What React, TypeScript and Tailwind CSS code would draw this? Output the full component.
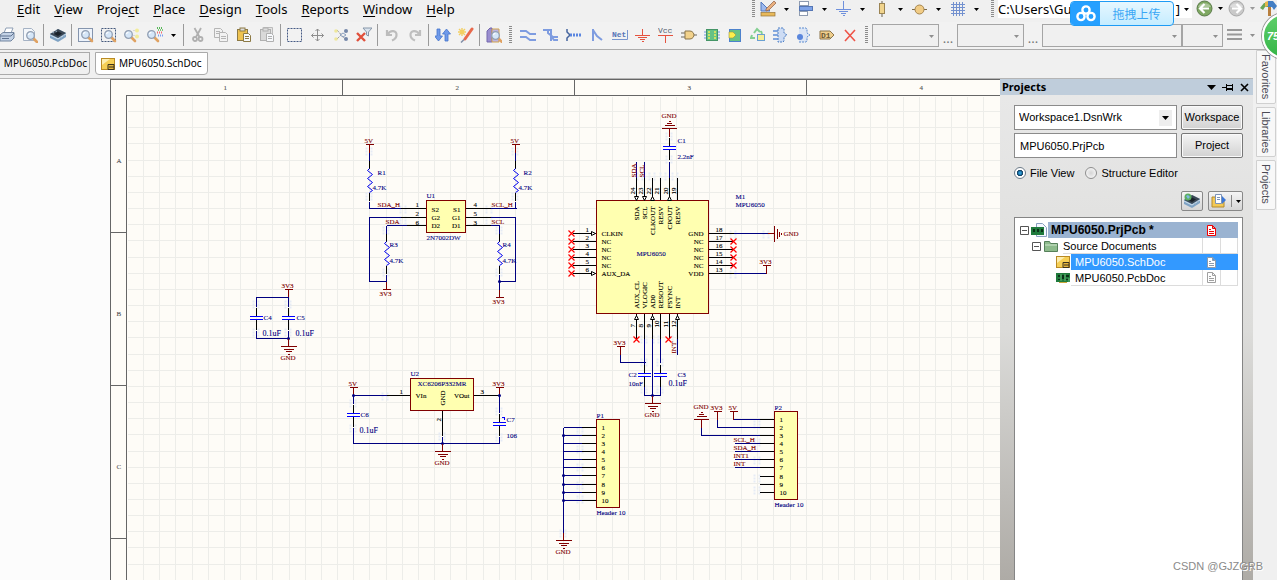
import React from "react";

type Kids = { children?: React.ReactNode };

/* ---------- small drawing helpers ---------- */

function Svg({ children, size = 16 }: Kids & { size?: number }) {
  return (
    <svg width={size} height={size} viewBox="0 0 16 16" fill="none" aria-hidden="true" className="shrink-0">
      {children}
    </svg>
  );
}

function Arrow({ color = "#000" }: { color?: string }) {
  return (
    <svg width="5" height="3" viewBox="0 0 5 3" aria-hidden="true" className="shrink-0">
      <path d="M0 0h5L2.5 3z" fill={color} />
    </svg>
  );
}

function Lens({ x = 0, y = 0 }: { x?: number; y?: number }) {
  return (
    <g transform={`translate(${x} ${y})`}>
      <path d="M8 8l4 4" stroke="#e0a262" strokeWidth="2.6" strokeLinecap="round" />
      <circle cx="5.5" cy="5.5" r="3.8" fill="#d5e6f8" stroke="#93a0b3" strokeWidth="1.3" />
      <path d="M3.4 5a2.4 2.4 0 0 1 2-1.8" stroke="#fff" strokeWidth="1.1" />
    </g>
  );
}

const Board = () => (
  <g>
    <path d="M0 7l8-5 8 4v4l-8 5-8-4z" fill="#7fa3c4" />
    <path d="M0 7l8-5 8 4-8 5z" fill="#3b4754" />
    <path d="M4 7l4-2.600 4 2-4 2.600z" fill="#1a222b" />
    <path d="M0 8l8 4 8-5" stroke="#cfe0ee" strokeWidth="1" />
    <path d="M2 5l2 1M5 3.500l2 1M10 10l2 1M13 8l2 1" stroke="#9fb4c6" />
  </g>
);

const Clip = ({ a, b }: { a: string; b: string }) => (
  <g>
    <rect x="1.500" y="2.500" width="10" height="11" fill={a} stroke={b} />
    <rect x="4" y="1" width="5" height="3" fill="#ddd" stroke={b} />
    <path d="M7.500 6.500h5l2 2v6h-7z" fill="#f6f8fb" stroke={b} />
    <path d="M9 9.500h4M9 11.500h4" stroke={b} />
  </g>
);

const blue = "#7e9ce0";

const icons: Record<string, React.ReactNode> = {
  print: (
    <g>
      <path d="M5 6l2-5h7l-2 5" fill="#fff" stroke="#8f9fb5" />
      <path d="M1 8l3-2.500h11V11l-3 3H1z" fill="#c3d2e6" stroke="#7386a0" />
      <path d="M1 9h11l3-3M3 11.500h7" stroke="#5f7391" />
    </g>
  ),
  preview: (
    <g>
      <path d="M1.500 1.500h8l3 3v9h-11z" fill="#f4f7fb" stroke="#a5b2c4" />
      <Lens x={3} y={3} />
    </g>
  ),
  board: <Board />,
  zoomDoc: (
    <g>
      <rect x="0.500" y="1.500" width="14" height="13" fill="#edf3fb" stroke="#8595ae" />
      <Lens x={2} y={2} />
    </g>
  ),
  zoomArea: (
    <g>
      <rect x="0.500" y="1.500" width="14" height="13" stroke="#44597c" strokeDasharray="2 1" />
      <Lens x={2} y={2} />
    </g>
  ),
  zoomSel: (
    <g>
      <Lens x={-1} y={2} />
      <circle cx="13" cy="3.500" r="2" fill="#f2ec9a" />
      <circle cx="13" cy="9.500" r="2" fill="#f2ec9a" />
      <path d="M9 3.500h2M9 8.500h2" stroke="#d8d8d8" />
    </g>
  ),
  zoomFilter: (
    <g>
      <Lens x={-1} y={2} />
      <path d="M10 1h6" stroke="#57b857" strokeWidth="2" strokeDasharray="1 1" />
      <path d="M10 3h6" stroke="#7cc77c" strokeWidth="2" strokeDasharray="1 1" strokeDashoffset="1" />
      <path d="M10 5.500h6" stroke="#f07070" strokeWidth="2" strokeDasharray="1 1" />
      <path d="M11 8.500h5" stroke="#7c9df0" strokeWidth="2" strokeDasharray="1 1" />
    </g>
  ),
  cut: (
    <g stroke="#b0b0b0" strokeWidth="1.800">
      <path d="M4.500 1l5 9M11 1L6 10" />
      <circle cx="5" cy="12" r="2" />
      <circle cx="10.500" cy="12" r="2" />
    </g>
  ),
  copy: (
    <g fill="#f2f2f2" stroke="#b5b5b5">
      <path d="M1.500 1.500h6l2 2v7h-8z" />
      <path d="M6.500 5.500h6l2 2v7h-8z" />
      <path d="M3 4.500h4M3 6.500h3M8 9.500h5M8 11.500h5" />
    </g>
  ),
  paste: <Clip a="#efc350" b="#8d7a45" />,
  pasteAll: (
    <g>
      <path d="M4.500 0.500h9v9h-9z" fill="#e4e4e4" stroke="#bbb" />
      <Clip a="#d9d9d9" b="#b0b0b0" />
    </g>
  ),
  select: <rect x="0.500" y="1.500" width="14" height="13" stroke="#465b85" strokeDasharray="2 1" />,
  move: (
    <path d="M7.500 2v12M1.500 8.500h12M5.500 4l2-2 2 2M5.500 12l2 2 2-2M3.500 6.500l-2 2 2 2M11.500 6.500l2 2-2 2" stroke="#8d8d8d" />
  ),
  deselect: (
    <g>
      <path d="M4 3l8 9M4 12l4-4" stroke="#666" strokeDasharray="1 1" />
      <circle cx="3" cy="4" r="1.800" fill="#eee79b" />
      <circle cx="3" cy="12" r="1.800" fill="#eee79b" />
      <circle cx="13" cy="4" r="2" fill="#7487a9" />
      <circle cx="13" cy="12" r="2" fill="#7487a9" />
      <path d="M7 8l3-2 3 2-3 2z" stroke="#8ba0c0" />
    </g>
  ),
  clearFilter: (
    <g>
      <path d="M7 1h9l-3.500 4v4l-2-1V5z" fill="#dbe4ee" stroke="#8898aa" />
      <path d="M1 6l8 8M9 6l-8 8" stroke="#e0503c" strokeWidth="2.400" />
    </g>
  ),
  undo: (
    <g stroke="#bcbcbc" strokeWidth="2.200">
      <path d="M4 7c2-4 9-4 8.500 1 0 3-2 4.500-4.500 5.500" />
      <path d="M3 3v5h5" />
    </g>
  ),
  redo: (
    <g stroke="#bfbfbf" strokeWidth="2.200">
      <path d="M12 7C10 3 3 3 3.500 8c0 3 2 4.500 4.500 5.500" />
      <path d="M13 3v5H8" />
    </g>
  ),
  updown: (
    <g fill="#6f9aea" stroke="#4573cc" strokeWidth="0.800">
      <path d="M2 2h3v7h2.500L3.500 14-0.500 9H2z" />
      <path d="M10 14h3V7h2.500L11.500 2 7.500 7H10z" />
    </g>
  ),
  wand: (
    <g>
      <path d="M4 1v8M0 5h8M1 2l6 6M7 2L1 8" stroke="#f3cf62" strokeWidth="1.400" />
      <path d="M14 2L7 12" stroke="#e8694c" strokeWidth="3" strokeLinecap="round" />
      <path d="M6 12.500l-3 3" stroke="#7f8da5" strokeWidth="1.500" />
    </g>
  ),
  find: (
    <g>
      <path d="M1 4l3-3h2v14H1z" fill="#9a8ed0" stroke="#7468ad" />
      <path d="M6 2h7v13H6z" fill="#bdb4e2" stroke="#d0a350" />
      <Lens x={4} y={3} />
    </g>
  ),
  wire: <path d="M0 4h6l4 3h6M0 10h6l4 3h6" stroke={blue} strokeWidth="2" />,
  bus: <path d="M0 3h8v11M5 3v3l5 4h5M8 9l3 4h4" stroke={blue} strokeWidth="2" />,
  harness: (
    <g>
      <path d="M1 2v3l3 3-3 3v3" stroke="#46659f" strokeWidth="1.500" />
      <path d="M4 8h12" stroke="#5b86e0" strokeWidth="3" strokeDasharray="2 1" />
    </g>
  ),
  entry: <path d="M4 2v12M4 3l4 6 5 4" stroke={blue} strokeWidth="2" />,
  net: (
    <g>
      <text x="0" y="10" className="font-['Liberation_Mono']" fontSize="8" fontWeight="700" fill="#5876b8">Net</text>
      <path d="M0 12.500h15.500V3" stroke="#7896cf" />
    </g>
  ),
  gnd: <path d="M7.500 2v7M0 8.500h15M3 10.500h9M5 12.500h5M7 14.500h2" stroke="#e5533f" />,
  vcc: (
    <g>
      <text x="0" y="6" className="font-['Liberation_Mono']" fontSize="8" fill="#555f70">Vcc</text>
      <path d="M0 8.500h15M7.500 8v8" stroke="#e5533f" />
    </g>
  ),
  gate: (
    <g>
      <path d="M0 6h4M0 10h4M12 8h4" stroke="#6b675e" />
      <path d="M4 4h5c3 0 4 3 4 4s-1 4-4 4H4z" fill="#f2d28c" stroke="#8a7448" />
    </g>
  ),
  ic: (
    <g>
      <path d="M0 5h16M0 8h16M0 11h16" stroke="#6d95df" />
      <rect x="2.500" y="2.500" width="11" height="11" fill="#66c285" stroke="#459567" />
      <path d="M4 5h2M4 8h2M4 11h2M10 5h2M10 8h2M10 11h2" stroke="#f4ec5a" strokeWidth="1.500" />
    </g>
  ),
  sheet: (
    <g>
      <rect x="2.500" y="2.500" width="11" height="12" fill="#66c285" stroke="#4d82cc" />
      <path d="M2 5h4l3 3-3 3H2z" fill="#fbee4c" stroke="#9b9340" strokeWidth="0.600" />
    </g>
  ),
  device: (
    <g>
      <path d="M4 6l3-4 3 3M2 8l-1 3h4M11 4l1 3" stroke="#83cf91" strokeWidth="2" />
      <rect x="7.500" y="7.500" width="7" height="6" fill="#f7ee94" stroke="#6aa0d2" />
    </g>
  ),
  harnessConn: (
    <g>
      <path d="M5 1h5l1 1v4l3 2-3 2v4l-1 1H5z" fill="#cddcf4" stroke="#4c7ec4" strokeDasharray="2 1" />
      <path d="M0 4h5M0 8h5M0 12h5" stroke="#5f8fd8" strokeWidth="1.500" />
    </g>
  ),
  harnessEntry: (
    <g>
      <path d="M3 1h7l1 1v4l3 2-3 2v4l-1 1H3" fill="#dbe5f5" stroke="#5b8bd0" strokeDasharray="2 1" />
      <circle cx="4" cy="10" r="3" fill="#5a86dc" />
    </g>
  ),
  port: (
    <g>
      <path d="M1 4h10l4 4-4 4H1z" fill="#efce8c" stroke="#8c744a" />
      <text x="2" y="11" className="font-['Liberation_Mono']" fontSize="8" fontWeight="700" fill="#6c5a37">D1</text>
    </g>
  ),
  noErc: <path d="M3 3l10 11M13 3L3 14" stroke="#ee5448" strokeWidth="1.600" />,
  draw: (
    <g>
      <path d="M1 1l9 9H1z" fill="#9db9ee" stroke="#5378bd" />
      <path d="M6 8l8-8 2 2-7 7-3 1z" fill="#e9b07e" stroke="#8c5d45" strokeWidth="0.700" />
      <rect x="1" y="11.500" width="14" height="3.500" fill="#e8b95a" stroke="#96743a" strokeWidth="0.700" />
    </g>
  ),
  align: (
    <g>
      <rect x="1.500" y="0.500" width="9" height="4" fill="#fff" stroke="#8e9bb0" />
      <rect x="1.500" y="5.500" width="13" height="4" fill="#7ea3e8" stroke="#5677b5" />
      <rect x="1.500" y="10.500" width="8" height="4" fill="#fff" stroke="#8e9bb0" />
    </g>
  ),
  power: <path d="M7.500 0v8M0 8.500h15M3 10.500h9M5 12.500h5M7 14.500h2" stroke="#6f90dc" />,
  resistor: (
    <g>
      <path d="M8 0v16" stroke="#6b6250" />
      <rect x="5.500" y="2.500" width="5" height="10" fill="#f1d48d" stroke="#9b8453" />
    </g>
  ),
  probe: (
    <g>
      <path d="M0 8.500h15" stroke="#7a6b4c" />
      <circle cx="7.500" cy="8.500" r="4.500" fill="#f1cc86" stroke="#a5854e" />
    </g>
  ),
  grid: <path d="M3.500 1v14M6.500 1v14M9.500 1v14M12.500 1v14M1 3.500h14M1 6.500h14M1 9.500h14M1 12.500h14" stroke="#7391cf" />,
};

function Tool({ icon, label }: { icon: string; label: string }) {
  return (
    <button type="button" aria-label={label} className="flex h-6 w-[23px] shrink-0 items-center justify-center">
      <Svg>{icons[icon]}</Svg>
    </button>
  );
}

const Sep = () => <span className="mx-0.5 h-[22px] w-px shrink-0 bg-[#9a9a9a]" />;

const Grip = () => (
  <svg width="3" height="18" aria-hidden="true" className="mx-1 shrink-0">
    <path d="M1.500 0v18" stroke="#8c8c8c" strokeWidth="3" strokeDasharray="1 1" />
  </svg>
);

function StyleSelect({ label, className }: { label: string; className: string }) {
  return (
    <span className={`grid h-[23px] shrink-0 items-center border border-[#a5a5a5] bg-[#f0f0f0] ${className}`}>
      <select aria-label={label} className="col-start-1 row-start-1 h-full w-full appearance-none bg-transparent">
        <option></option>
      </select>
      <span className="pointer-events-none col-start-1 row-start-1 mr-1 justify-self-end">
        <Arrow color="#8f8f8f" />
      </span>
    </span>
  );
}

/* ---------- schematic ---------- */

const NAVY = "#000080";
const RED = "#800000";

const range = (n: number) => Array.from({ length: n }, (_, i) => i);
const PITCH = 16.16;
const gridPath =
  range(140).map((i) => `M${Math.round(127 + (i + 1) * PITCH)} 96V2200`).join("") +
  range(120).map((i) => `M127 ${Math.round(95 + (i + 1) * PITCH)}H2500`).join("");

function T({ x, y, c = NAVY, s = 7, up, end, children }: { x: number; y: number; c?: string; s?: number; up?: boolean; end?: boolean; children: React.ReactNode }) {
  return (
    <text
      x={x - 1}
      y={y - 1}
      fill={c}
      stroke={c}
      strokeWidth="0.1"
      fontSize={s}
      textAnchor={end ? "end" : "start"}
      transform={up ? `rotate(-90 ${x - 1} ${y - 1})` : undefined}
    >
      {children}
    </text>
  );
}

const Chip = ({ x, y, w, h }: { x: number; y: number; w: number; h: number }) => (
  <rect x={x} y={y} width={w} height={h} fill="#ffffb0" stroke={RED} shapeRendering="crispEdges" />
);

const Gnd = ({ x, y }: { x: number; y: number }) => (
  <g>
    <path d={`M${x} ${y - 8}v8M${x - 8} ${y}h16M${x - 5} ${y + 3}h10M${x - 3} ${y + 5}h6M${x - 1} ${y + 8}h2`} stroke={RED} shapeRendering="crispEdges" />
    <T x={x - 7} y={y + 14} c={RED}>GND</T>
  </g>
);

const GndUp = ({ x, y }: { x: number; y: number }) => (
  <g>
    <path d={`M${x} ${y + 8}v-8M${x - 8} ${y}h15M${x - 5} ${y - 3}h10M${x - 3} ${y - 5}h5M${x - 1} ${y - 7}h2`} stroke={RED} shapeRendering="crispEdges" />
    <T x={x - 7} y={y - 10} c={RED}>GND</T>
  </g>
);

const Rail = ({ x, y, name, down }: { x: number; y: number; name: string; down?: boolean }) => (
  <g>
    <path d={`M${x - 4} ${y}h8M${x} ${y}v${down ? -8 : 8}`} stroke={RED} shapeRendering="crispEdges" />
    <T x={x - (name.length > 2 ? 6 : 4)} y={down ? y + 7 : y - 1} c={RED}>{name}</T>
  </g>
);

const Zig = ({ x, y }: { x: number; y: number }) => (
  <g>
    <path d={`M${x} ${y - 8}v8M${x} ${y + 24}v8`} stroke="#000" shapeRendering="crispEdges" />
    <path d={`M${x} ${y}l-2 2 5 4-5 4 5 4-5 4 5 4-3 2`} stroke="#0000ee" />
    <path d={`M${x} ${y - 16}v8M${x} ${y + 33}v7`} stroke={NAVY} shapeRendering="crispEdges" />
  </g>
);

const Cap = ({ x, y }: { x: number; y: number }) => (
  <g shapeRendering="crispEdges">
    <path d={`M${x} ${y - 9}v9M${x} ${y + 3}v10`} stroke="#000" />
    <path d={`M${x - 7} ${y}h13M${x - 7} ${y + 3}h13`} stroke="#0000ff" />
  </g>
);

const Dot = ({ x, y }: { x: number; y: number }) => <circle cx={x} cy={y} r="1.5" fill={NAVY} />;
const Cross = ({ x, y }: { x: number; y: number }) => (
  <path d={`M${x - 3} ${y - 3}l6 6M${x + 3} ${y - 3}l-6 6`} stroke="#ff0000" strokeWidth="1.2" />
);

const headerRows = [0, 8, 16, 24, 32, 40, 48, 57, 65, 73];
const leftPins = ["CLKIN", "NC", "NC", "NC", "NC", "AUX_DA"];
const rightPins = ["GND", "NC", "NC", "NC", "NC", "VDD"];
const topPins = ["SDA", "SCL", "CLKOUT", "RESV", "CPOUT", "RESV"];
const bottomPins = ["AUX_CL", "VLOGIC", "AD0", "RESOUT", "FSYNC", "INT"];
const pinX = [636, 644, 652, 660, 669, 677];
const halos = [
  [369, 150], [369, 195], [515, 150], [515, 195], [403, 208], [403, 219], [489, 208], [489, 219],
  [386, 229], [386, 271], [499, 229], [499, 271], [669, 135], [669, 158], [640, 175], [652, 175],
  [663, 175], [675, 175], [733, 233], [766, 233], [733, 273], [644, 338], [656, 338], [675, 338],
  [644, 361], [660, 361], [644, 388], [660, 388], [256, 303], [288, 303], [256, 331], [288, 331],
  [385, 395], [353, 402], [353, 427], [499, 410], [499, 436], [442, 435], [580, 430], [580, 448],
  [580, 466], [580, 484], [580, 498], [563, 532], [757, 423], [757, 441], [757, 459], [757, 477], [757, 489],
];

function Schematic() {
  return (
    <svg
      role="img"
      aria-label="MPU6050 schematic sheet"
      className="h-full w-full overflow-hidden bg-[#fefcf7] font-['Liberation_Serif',serif]"
      fill="none"
    >
      <g transform="translate(-109.5 -78.5)">
        <path d={gridPath} stroke="#ededE9" shapeRendering="crispEdges" />
        <path
          d="M110 2200V79H2500M126 2200V95H2500M342 79v16M574 79v16M806 79v16M1038 79v16M110 232h16M110 385h16M110 538h16M110 691h16"
          stroke="#666"
          shapeRendering="crispEdges"
        />
        {["1", "2", "3", "4"].map((n, i) => (
          <T key={n} x={224 + i * 232} y={90} c="#555">{n}</T>
        ))}
        {["A", "B", "C"].map((n, i) => (
          <T key={n} x={117} y={163 + i * 153} c="#555">{n}</T>
        ))}
        {halos.map(([x, y]) => (
          <path key={`${x}-${y}`} d={`M${x - 3} ${y - 3}v8M${x + 2} ${y - 3}v8`} stroke="#e6ebf6" strokeWidth="2" strokeDasharray="2 1" />
        ))}

        {/* level shifter */}
        <Rail x={369} y={144} name="5V" />
        <Rail x={515} y={144} name="5V" />
        <Zig x={369} y={168} />
        <Zig x={515} y={168} />
        <Zig x={386} y={241} />
        <Zig x={499} y={241} />
        <g shapeRendering="crispEdges">
          <path d="M369 208H401M401 217H369V281H386M386 225H406M386 225V233M490 208H516M490 217H515V281H499M490 225H499V233M499 280V289" stroke={NAVY} />
          <path d="M400 208H426M400 217H426M406 225H426M465 208H490M465 217H490M465 225H490" stroke="#000" />
        </g>
        <Rail x={386} y={289} name="3V3" down />
        <Rail x={499} y={297} name="3V3" down />
        <Dot x={499} y={281} />
        <Chip x={426} y={200} w={39} h={32} />
        <T x={427} y={198}>U1</T>
        <T x={427} y={240}>2N7002DW</T>
        <T x={378} y={175}>R1</T>
        <T x={373} y={190}>4.7K</T>
        <T x={524} y={175}>R2</T>
        <T x={519} y={190}>4.7K</T>
        <T x={390} y={247}>R3</T>
        <T x={390} y={263}>4.7K</T>
        <T x={503} y={247}>R4</T>
        <T x={503} y={263}>4.7K</T>
        <T x={378} y={207} c={RED}>SDA_H</T>
        <T x={386} y={224} c={RED}>SDA</T>
        <T x={492} y={207} c={RED}>SCL_H</T>
        <T x={492} y={224} c={RED}>SCL</T>
        {[["1", "S2", "S1", "4"], ["2", "G2", "G1", "5"], ["6", "D2", "D1", "3"]].map(([a, b, c, d], i) => (
          <g key={a}>
            <T x={416} y={207 + i * 9} c="#000">{a}</T>
            <T x={432} y={212 + i * 8} c="#000">{b}</T>
            <T x={461} y={212 + i * 8} c="#000" end>{c}</T>
            <T x={474} y={207 + i * 9} c="#000">{d}</T>
          </g>
        ))}

        {/* decoupling capacitors */}
        <Rail x={288} y={289} name="3V3" />
        <Cap x={256} y={316} />
        <Cap x={288} y={316} />
        <path d="M256 306V297H288V306M256 330V338H288V330" stroke={NAVY} shapeRendering="crispEdges" />
        <Dot x={288} y={338} />
        <Gnd x={288} y={346} />
        <T x={264} y={320}>C4</T>
        <T x={263} y={336} s={8}>0.1uF</T>
        <T x={297} y={320}>C5</T>
        <T x={296} y={336} s={8}>0.1uF</T>

        {/* regulator */}
        <Rail x={353} y={387} name="5V" />
        <Rail x={499} y={387} name="3V3" />
        <Cap x={353} y={413} />
        <Cap x={499} y={422} />
        <g shapeRendering="crispEdges">
          <path d="M386 395H353V403M353 427V443H499V436M499 395V412M442 436V443" stroke={NAVY} />
          <path d="M386 395H410M473 395H499M442 410V435" stroke="#000" />
          <path d="M501 417h3v2" stroke="#0000ff" />
        </g>
        <Dot x={353} y={395} />
        <Dot x={499} y={395} />
        <Dot x={442} y={443} />
        <Gnd x={442} y={451} />
        <Chip x={410} y={378} w={63} h={32} />
        <T x={411} y={376}>U2</T>
        <T x={418} y={386}>XC6206P332MR</T>
        <T x={416} y={398} c="#000">VIn</T>
        <T x={470} y={398} c="#000" end>VOut</T>
        <T x={445} y={406} c="#000" up>GND</T>
        <T x={400} y={394} c="#000">1</T>
        <T x={481} y={394} c="#000">3</T>
        <T x={441} y={422} c="#000" up>2</T>
        <T x={361} y={417}>C6</T>
        <T x={360} y={433} s={8}>0.1uF</T>
        <T x={507} y={422}>C7</T>
        <T x={507} y={438}>106</T>

        {/* sensor */}
        <GndUp x={669} y={128} />
        <Cap x={669} y={146} />
        <g shapeRendering="crispEdges">
          <path d="M636 161V177M644 161V177M669 161V177M733 233H767M733 273H766M644 338V364M652 338V395M660 338V362M677 338V354M620 354V362H645M644 386V395H660V386" stroke={NAVY} />
          <path d="M767 233H774M774 225V241M777 228V238M779 231V236M781 232V234" stroke={RED} />
          {pinX.map((x) => (
            <path key={x} d={`M${x} 177V200M${x} 313V338`} stroke="#000" />
          ))}
          {range(6).map((i) => (
            <path key={i} d={`M572 ${233 + i * 8}H596M708 ${233 + i * 8}H733`} stroke="#000" />
          ))}
        </g>
        <T x={784} y={236} c={RED}>GND</T>
        <Rail x={766} y={265} name="3V3" />
        <Rail x={620} y={346} name="3V3" />
        <Cap x={644} y={373} />
        <Cap x={660} y={373} />
        <Dot x={652} y={395} />
        <Gnd x={652} y={403} />
        <Chip x={596} y={200} w={112} h={113} />
        {range(6).map((i) => (
          <g key={i}>
            <Cross x={571} y={233 + i * 8} />
            {i > 0 && i < 5 && <Cross x={733} y={233 + i * 8} />}
            <T x={586} y={232 + i * 8} c="#000">{i + 1}</T>
            <T x={716} y={232 + i * 8} c="#000">{18 - i}</T>
            <T x={602} y={236 + i * 8} c="#000">{leftPins[i]}</T>
            <T x={704} y={236 + i * 8} c="#000" end>{rightPins[i]}</T>
            <T x={pinX[i] - 1} y={195} c="#000" up>{24 - i}</T>
            <T x={pinX[i] + 3} y={207} c="#000" up end>{topPins[i]}</T>
            <T x={pinX[i] + 3} y={309} c="#000" up>{bottomPins[i]}</T>
            <T x={pinX[i] - 1} y={328} c="#000" up>{i + 7}</T>
          </g>
        ))}
        <path
          d="M591 231v4l4-2zM591 271v4l4-2zM634 196h4l-2 4zM642 196h4l-2 4zM650 200h4l-2-4zM667 200h4l-2-4zM634 319h4l-2-4zM650 319h4l-2-4zM675 319h4l-2-4z"
          fill="#fff"
          stroke="#000"
        />
        <Cross x={636} y={339} />
        <Cross x={668} y={339} />
        <T x={636} y={178} c={RED} up>SDA</T>
        <T x={644} y={178} c={RED} up>SCL</T>
        <T x={676} y={354} c={RED} up>INT</T>
        <T x={678} y={143}>C1</T>
        <T x={678} y={159}>2.2nF</T>
        <T x={736} y={199}>M1</T>
        <T x={736} y={207}>MPU6050</T>
        <T x={637} y={256}>MPU6050</T>
        <T x={629} y={377}>C2</T>
        <T x={629} y={386}>10nF</T>
        <T x={678} y={377}>C3</T>
        <T x={669} y={386} s={8}>0.1uF</T>

        {/* headers */}
        <g shapeRendering="crispEdges">
          <path d="M563 427V532" stroke={NAVY} />
          {headerRows.map((r, i) => (
            <g key={r}>
              <path d={`M563 ${427 + r}H581`} stroke={NAVY} />
              <path d={`M581 ${427 + r}H596M759 ${419 + r}H774`} stroke="#000" />
              {i > 2 && i < 7 && <path d={`M734 ${419 + r}H759`} stroke={NAVY} />}
            </g>
          ))}
          <path d="M733 419H759M717 419V427H759M701 427V435H759" stroke={NAVY} />
        </g>
        {[8, 48, 57, 65, 73].map((r) => (
          <Dot key={r} x={563} y={427 + r} />
        ))}
        <Gnd x={563} y={540} />
        <GndUp x={701} y={419} />
        <Rail x={717} y={411} name="3V3" />
        <Rail x={733} y={411} name="5V" />
        <Chip x={596} y={419} w={23} h={88} />
        <Chip x={774} y={411} w={23} h={88} />
        {headerRows.map((r, i) => (
          <g key={r}>
            <T x={602} y={430 + r} c="#000">{i + 1}</T>
            <T x={780} y={422 + r} c="#000">{i + 1}</T>
          </g>
        ))}
        <T x={597} y={418}>P1</T>
        <T x={775} y={410}>P2</T>
        <T x={597} y={515}>Header 10</T>
        <T x={775} y={507}>Header 10</T>
        {["SCL_H", "SDA_H", "INT1", "INT"].map((n, i) => (
          <T key={n} x={734} y={442 + i * 8} c={RED}>{n}</T>
        ))}
      </g>
    </svg>
  );
}

/* ---------- header ---------- */

const menus: [string, string, string][] = [
  ["", "E", "dit"],
  ["", "V", "iew"],
  ["Proje", "c", "t"],
  ["", "P", "lace"],
  ["", "D", "esign"],
  ["", "T", "ools"],
  ["", "R", "eports"],
  ["", "W", "indow"],
  ["", "H", "elp"],
];

const menuTools = [
  ["draw", "Drawing tools"],
  ["align", "Alignment tools"],
  ["power", "Power sources"],
  ["resistor", "Digital devices"],
  ["probe", "Simulation sources"],
  ["grid", "Grids"],
];

function Nav({ back }: { back?: boolean }) {
  return (
    <svg width="17" height="17" viewBox="0 0 17 17" aria-hidden="true">
      <circle cx="8.500" cy="8.500" r="7.500" fill={back ? "#7fa862" : "#c9c9c9"} stroke={back ? "#5c7b4b" : "#a8a8a8"} />
      <path d="M2 7a7 6 0 0 1 13 0" fill="#fff" opacity=".35" />
      <path
        d={back ? "M8.500 4L4 8.500 8.500 13M4.500 8.500H13" : "M8.500 4L13 8.500 8.500 13M12.500 8.500H4"}
        stroke="#fff"
        strokeWidth="2.200"
        fill="none"
      />
    </svg>
  );
}

function MenuBar() {
  return (
    <div className="flex h-[22px] items-start overflow-hidden">
      <nav className="flex w-[752px] shrink-0 gap-[14px] pl-[17px] font-['Noto_Sans',sans-serif] text-[13px] leading-[18px] text-black">
        {menus.map(([a, b, c]) => (
          <button key={a + b + c} type="button">
            {a}
            <span className="underline underline-offset-2">{b}</span>
            {c}
          </button>
        ))}
      </nav>
      <div className="flex h-[18px] shrink-0 items-center">
        <svg width="3" height="18" aria-hidden="true" className="mr-1 shrink-0">
          <path d="M1.500 0v18" stroke="#8c8c8c" strokeWidth="3" strokeDasharray="1 1" />
        </svg>
        {menuTools.map(([icon, label]) => (
          <button key={icon} type="button" aria-label={label} className="flex w-[38px] items-center gap-2 pl-px">
            <Svg>{icons[icon]}</Svg>
            <Arrow />
          </button>
        ))}
        <Grip />
      </div>
      <label className="flex h-[18px] w-[194px] shrink-0 items-center bg-white pr-[3px]">
        <input
          aria-label="Document path"
          defaultValue="C:\Users\Gu"
          className="w-full min-w-0 bg-transparent font-['Noto_Sans',sans-serif] text-[13px] leading-[18px] text-black outline-none"
        />
        <span className="pr-1 font-['Noto_Sans',sans-serif] text-[13px] leading-[18px]">]</span>
        <Arrow />
      </label>
      <div className="flex h-[17px] shrink-0 items-center gap-[5px] pl-1">
        <button type="button" aria-label="Back"><Nav back /></button>
        <Arrow />
        <button type="button" aria-label="Forward"><Nav /></button>
        <Arrow color="#999" />
        <button type="button" aria-label="Home">
          <svg width="17" height="17" viewBox="0 0 17 17" aria-hidden="true">
            <path d="M8 5h3v11H8z" fill="#b87f3e" />
            <path d="M0 8l4-5h5v4H5l-2 3z" fill="#69a558" />
            <path d="M8 1h5l4 5-3 4-2-3H8z" fill="#447fc4" />
            <path d="M5 2l3-1v5l-3 1z" fill="#e5b74b" />
          </svg>
        </button>
      </div>
    </div>
  );
}

function ToolBar() {
  return (
    <div className="flex h-7 items-center overflow-hidden border-b border-[#acacac] bg-[#f2f2f2] pb-px">
      <div className="-ml-[5px] flex shrink-0 items-center">
        <Tool icon="print" label="Print" />
        <Tool icon="preview" label="Print preview" />
        <Sep />
        <Tool icon="board" label="Devices" />
        <Sep />
        <Tool icon="zoomDoc" label="Fit document" />
        <Tool icon="zoomArea" label="Zoom area" />
        <Tool icon="zoomSel" label="Zoom selected" />
        <Tool icon="zoomFilter" label="Zoom filtered" />
        <button type="button" aria-label="Zoom options" className="flex w-[15px] justify-center"><Arrow /></button>
        <Sep />
        <Tool icon="cut" label="Cut" />
        <Tool icon="copy" label="Copy" />
        <Tool icon="paste" label="Paste" />
        <Tool icon="pasteAll" label="Smart paste" />
        <Sep />
        <Tool icon="select" label="Select area" />
        <Tool icon="move" label="Move" />
        <Tool icon="deselect" label="Deselect all" />
        <Tool icon="clearFilter" label="Clear filter" />
        <Sep />
        <Tool icon="undo" label="Undo" />
        <Tool icon="redo" label="Redo" />
        <Sep />
        <Tool icon="updown" label="Up or down hierarchy" />
        <Tool icon="wand" label="Cross probe" />
        <Sep />
        <Tool icon="find" label="Browse library" />
        <Grip />
        <Tool icon="wire" label="Place wire" />
        <Tool icon="bus" label="Place bus" />
        <Tool icon="harness" label="Place signal harness" />
        <Tool icon="entry" label="Place bus entry" />
        <Tool icon="net" label="Place net label" />
        <Tool icon="gnd" label="Place ground" />
        <Tool icon="vcc" label="Place VCC" />
        <Tool icon="gate" label="Place part" />
        <Tool icon="ic" label="Place sheet symbol" />
        <Tool icon="sheet" label="Place sheet entry" />
        <Tool icon="device" label="Place device sheet" />
        <Tool icon="harnessConn" label="Place harness connector" />
        <Tool icon="harnessEntry" label="Place harness entry" />
        <Tool icon="port" label="Place port" />
        <Tool icon="noErc" label="Place no ERC" />
        <Grip />
      </div>
      <StyleSelect label="Font" className="w-[67px]" />
      <button type="button" className="w-[18px] shrink-0 pt-1.5 text-center font-['Noto_Sans',sans-serif] text-[13px] leading-4 text-[#777]">...</button>
      <StyleSelect label="Area colour" className="w-[67px]" />
      <button type="button" className="w-[18px] shrink-0 pt-1.5 text-center font-['Noto_Sans',sans-serif] text-[13px] leading-4 text-[#777]">...</button>
      <StyleSelect label="Font name" className="w-[140px]" />
      <StyleSelect label="Font size" className="w-[41px]" />
      <button type="button" aria-label="Line width" className="flex shrink-0 items-center gap-2 pl-1">
        <svg width="15" height="12" aria-hidden="true">
          <path d="M0 1h15M0 5.500h15M0 10h15" stroke="#999" strokeWidth="2" />
        </svg>
        <Arrow color="#8f8f8f" />
      </button>
    </div>
  );
}

function SchIcon() {
  return (
    <svg width="14" height="12" viewBox="0 0 14 12" aria-hidden="true" className="shrink-0">
      <rect x="0.500" y="0.500" width="13" height="11" fill="#f6cf55" stroke="#b98a24" />
      <path d="M1 1h8L1 7z" fill="#fdeeb0" />
      <path d="M7 6.500h6v5H7z" fill="#e5b53c" stroke="#3a3320" />
      <path d="M8 9h5" stroke="#3a3320" />
    </svg>
  );
}

function DocTabs() {
  return (
    <div className="flex h-[29px] items-start gap-[5px] border-b border-[#b5b5b5] pt-0.5 font-['Noto_Sans',sans-serif] text-[10px] text-black">
      <button type="button" className="flex h-[23px] w-[90px] shrink-0 items-center justify-end whitespace-nowrap rounded-br-sm border border-l-0 border-[#aaa] bg-[#f0f0f0] pr-0.5">
        MPU6050.PcbDoc
      </button>
      <button type="button" className="flex h-[23px] w-[113px] shrink-0 items-center gap-1 whitespace-nowrap rounded-b-sm border border-[#aaa] bg-white pl-[5px]">
        <SchIcon />
        MPU6050.SchDoc
      </button>
    </div>
  );
}

/* ---------- projects panel ---------- */

function PcbIcon() {
  return (
    <svg width="15" height="10" viewBox="0 0 15 10" aria-hidden="true" className="shrink-0">
      <rect width="14" height="9" fill="#1f7a3c" />
      <path d="M2 2h2v2H2zM6 2h2v4H6zM10 2h3v2h-3zM2 6h2v1H2zM10 6h2v1h-2z" fill="#0b3018" />
      <path d="M5 1v7M9 1v7M13 5v4" stroke="#7fd08e" strokeWidth="0.700" />
      <path d="M3 9.500h8" stroke="#caa83a" />
    </svg>
  );
}

function PageIcon({ color }: { color: string }) {
  return (
    <svg width="9" height="11" viewBox="0 0 9 11" aria-hidden="true">
      <path d="M0.500 0.500h5l3 3v7h-8zM5.500 0.500v3h3M2 4.500h2M2 6.500h5M2 8.500h5" fill="#fff" stroke={color} />
    </svg>
  );
}

function Expander() {
  return (
    <svg width="9" height="9" aria-hidden="true" className="shrink-0">
      <path d="M0.500 0.500h8v8h-8zM2 4.500h5" fill="#fff" stroke="#555" />
    </svg>
  );
}

const BTN =
  "flex h-[25px] items-center justify-center overflow-hidden whitespace-nowrap rounded-xs border border-[#777] bg-linear-to-b from-[#f4f4f4] to-[#d2d2d2] shadow-[inset_0_0_0_1px_#fafafa]";

function Cells({ icon, line = "border-[#dcdcdc]" }: { icon?: React.ReactNode; line?: string }) {
  return (
    <>
      <span className={`flex h-full w-[18px] shrink-0 items-center justify-center border-l ${line}`}>{icon}</span>
      <span className={`h-full w-[18px] shrink-0 border-x ${line}`} />
    </>
  );
}

function ProjectsPanel() {
  return (
    <aside className="flex w-[253px] shrink-0 flex-col bg-linear-to-b from-[#e9e9e9] via-[#dcdcda] to-[#aeaba6] font-['Liberation_Sans',sans-serif] text-[11px] text-black">
      <header className="flex h-4 shrink-0 items-center bg-[#bfcddb] pr-1 pl-0.5">
        <h2 className="flex-1 font-['Noto_Sans',sans-serif] text-[11px] leading-4 font-bold">Projects</h2>
        <div className="flex items-center gap-1.5">
          <button type="button" aria-label="Panel menu">
            <svg width="9" height="5" aria-hidden="true"><path d="M0 0h9L4.500 5z" /></svg>
          </button>
          <button type="button" aria-label="Pin panel">
            <svg width="12" height="9" aria-hidden="true">
              <path d="M0 4.500h4M4.500 1v7M10.500 1v7M5 2.500h5M5 6.500h5" stroke="#000" fill="none" />
              <path d="M5 5h5v2H5z" fill="#000" />
            </svg>
          </button>
          <button type="button" aria-label="Close panel">
            <svg width="9" height="9" aria-hidden="true"><path d="M1 1l7 7M8 1L1 8" stroke="#000" strokeWidth="1.600" /></svg>
          </button>
        </div>
      </header>
      <div className="flex flex-1 flex-col pt-[10px] pr-[10px] pl-[14px]">
        <div className="grid grid-cols-[1fr_62px] gap-x-1 gap-y-[3px]">
          <span className="grid h-[25px] items-center border border-[#8b8b8b] bg-white">
            <select aria-label="Workspace name" className="col-start-1 row-start-1 h-full w-full appearance-none pl-1">
              <option>Workspace1.DsnWrk</option>
            </select>
            <span className="pointer-events-none col-start-1 row-start-1 mr-1 flex h-4 w-[13px] items-center justify-center justify-self-end bg-[#eee]">
              <svg width="7" height="4" aria-hidden="true"><path d="M0 0h7L3.500 4z" /></svg>
            </span>
          </span>
          <button type="button" className={BTN}>Workspace</button>
          <input aria-label="Project name" defaultValue="MPU6050.PrjPcb" className="h-[25px] min-w-0 border border-[#8b8b8b] bg-white px-[5px] outline-none" />
          <button type="button" className={BTN}>Project</button>
        </div>
        <div className="mt-2 flex h-[14px] items-center gap-[11px]">
          <label className="flex items-center gap-1">
            <input type="radio" name="view" defaultChecked className="h-3 w-3 appearance-none rounded-full border border-[#6c7a88] bg-white bg-radial from-[#2d9ad6] from-15% via-[#0b3a5c] via-40% to-white to-50%" />
            File View
          </label>
          <label className="flex items-center gap-1">
            <input type="radio" name="view" className="h-3 w-3 appearance-none rounded-full border border-[#8e8e8e] bg-radial from-[#d5d5d5] to-white" />
            Structure Editor
          </label>
        </div>
        <div className="mt-[11px] flex justify-end gap-[5px]">
          <button type="button" aria-label="Compile project" className="flex h-5 w-[22px] items-center justify-center rounded-xs border border-[#888] bg-linear-to-b from-[#f5f5f5] to-[#d5d5d5]">
            <Svg>
              <Board />
              <circle cx="4" cy="4" r="3.500" fill="#5cae62" />
              <path d="M2 3l2-1 2 2-2 2z" fill="#7cb7e6" />
            </Svg>
          </button>
          <button type="button" aria-label="Open document" className="flex h-5 w-[35px] items-center justify-center gap-1 rounded-xs border border-[#888] bg-linear-to-b from-[#f5f5f5] to-[#d5d5d5]">
            <Svg>
              <path d="M1 4h5l1 2h6v8H1z" fill="#f3c956" stroke="#b38a2e" />
              <path d="M4.500 1.500h6v9h-6z" fill="#fff" stroke="#7b93b8" />
              <path d="M6 4.500h3M6 6.500h3" stroke="#7b93b8" />
              <path d="M11 3l4 4-4 4z" fill="#3b77d8" />
            </Svg>
            <span className="h-3 w-px bg-[#888]" />
            <Arrow />
          </button>
        </div>
        <div className="mt-1.5 flex flex-1 flex-col border border-b-0 border-[#858585] bg-white pt-1 pr-1 pl-[5px] leading-4">
          <div className="flex h-4 items-center">
            <Expander />
            <span className="flex w-[18px] items-center pl-0.5">
              <svg width="16" height="14" viewBox="0 0 16 14" aria-hidden="true" className="shrink-0">
                <path d="M5.500 0.500h6l4 4v9h-10z" fill="#f4f8ff" stroke="#8aa0c0" />
                <rect y="4" width="13" height="8" fill="#1f7a3c" />
                <path d="M2 6h2v3H2zM6 6h2v3H6zM10 6h2v3h-2z" fill="#0b3018" />
              </svg>
            </span>
            <span className="ml-px flex h-full min-w-0 flex-1 items-center bg-[#9ab3d1] pl-[3px] text-[12px] font-bold whitespace-nowrap">
              <span className="flex-1">MPU6050.PrjPcb *</span>
              <Cells line="border-[#9ab3d1]" icon={<PageIcon color="#f00000" />} />
            </span>
          </div>
          <div className="flex h-4 items-center pl-3">
            <Expander />
            <svg width="14" height="12" viewBox="0 0 14 12" aria-hidden="true" className="ml-[3px] shrink-0">
              <path d="M0.500 1.500h5l1 2h7v8h-13z" fill="#8dbb8c" stroke="#55805a" />
              <path d="M1 5h12" stroke="#cfe6cd" />
            </svg>
            <span className="ml-[5px] flex h-full flex-1 border-b border-[#dcdcdc]">
              <span className="flex-1">Source Documents</span>
              <Cells />
            </span>
          </div>
          <div className="flex h-4 items-center pl-9">
            <SchIcon />
            <span className="ml-px flex h-full flex-1 bg-[#3399ff] pl-1 text-white">
              <span className="flex-1">MPU6050.SchDoc</span>
              <Cells line="border-[#3399ff]" icon={<PageIcon color="#8c9aac" />} />
            </span>
          </div>
          <div className="flex h-4 items-center pl-9">
            <PcbIcon />
            <span className="flex h-full flex-1 border-b border-[#dcdcdc] pl-1">
              <span className="flex-1">MPU6050.PcbDoc</span>
              <Cells icon={<PageIcon color="#a0a0a0" />} />
            </span>
          </div>
        </div>
      </div>
    </aside>
  );
}

const SIDE =
  "flex w-5 items-center rounded-r-xs border border-[#d0d0d0] bg-[#f8f8f8] pt-[3px] font-['Liberation_Sans',sans-serif] text-[11px] leading-[14px] text-[#4b4b55] [writing-mode:vertical-rl]";

export default function App() {
  return (
    <div className="relative flex min-h-screen flex-col overflow-hidden bg-[#f0f0f0]">
      <MenuBar />
      <ToolBar />
      <div className="flex flex-1">
        <div className="flex min-w-0 flex-1 flex-col">
          <DocTabs />
          <main className="flex flex-1">
            <div className="w-[110px] shrink-0 bg-[#fcfcfc]" />
            <div className="grid min-w-0 flex-1 [contain:size]">
              <Schematic />
            </div>
            <ProjectsPanel />
          </main>
        </div>
        <div className="flex w-6 shrink-0 flex-col items-end gap-[3px] pr-px">
          <button type="button" className={`${SIDE} h-[54px]`}>Favorites</button>
          <button type="button" className={`${SIDE} h-[50px]`}>Libraries</button>
          <button type="button" className={`${SIDE} h-[50px]`}>Projects</button>
        </div>
      </div>

      <button
        type="button"
        className="absolute top-px right-[103px] flex h-[25px] w-[104px] items-center overflow-hidden rounded border border-[#1e9bf5] bg-linear-to-b from-[#e6f7ff] to-[#c5ecff] text-[12px] text-[#3aa7f5]"
      >
        <span className="flex h-full w-[29px] items-center justify-center bg-[#26a0ff]">
          <svg width="20" height="17" viewBox="0 0 20 17" fill="none" stroke="#fff" strokeWidth="2.400" aria-hidden="true">
            <circle cx="10" cy="5" r="3.600" />
            <circle cx="5" cy="11.500" r="3.600" />
            <circle cx="15" cy="11.500" r="3.600" />
          </svg>
        </span>
        <span className="flex-1 text-center font-['Noto_Sans_CJK_SC',sans-serif]">拖拽上传</span>
      </button>

      <div className="absolute top-[13px] -right-[31px] flex h-[46px] w-[46px] items-center rounded-full border-2 border-white bg-linear-to-b from-[#5fcf6a] to-[#33b547] pl-[3px] font-['Liberation_Sans',sans-serif] text-[11px] font-bold text-white italic shadow-[0_0_0_1px_#999]">
        75
      </div>

      <p className="absolute right-[14px] bottom-1.5 font-['Liberation_Sans',sans-serif] text-[11px] leading-4 text-[#8a8a8a] [text-shadow:1px_1px_0_#fff]">
        CSDN @GJZGRB
      </p>
    </div>
  );
}
